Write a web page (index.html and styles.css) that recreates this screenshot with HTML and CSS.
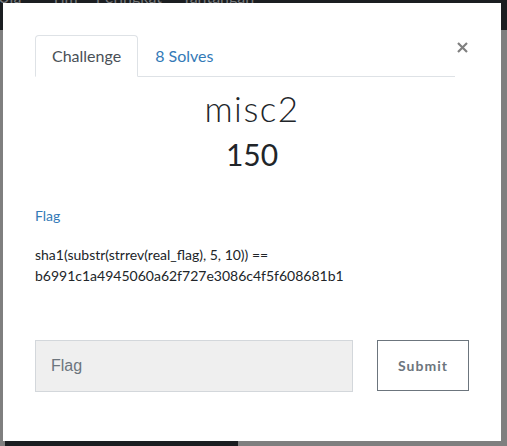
FILE: index.html
```html
<!DOCTYPE html>
<html lang="id">
<head>
<meta charset="utf-8">
<title>misc2</title>
<link rel="stylesheet" href="styles.css">
</head>
<body>
<header class="navbar">
  <span class="nav-brand">Ula</span>
  <span class="nav-item nav-tim">Tim</span>
  <span class="nav-item nav-rank">Peringkat</span>
  <span class="nav-item nav-chal">Tantangan</span>
</header>
<main class="page"></main>
<div class="page-foot"><div class="foot-dark"></div></div>

<div class="modal">
  <div class="modal-head">
    <nav class="tabs">
      <span class="tab tab-active">Challenge</span>
      <span class="tab tab-link">8 Solves</span>
    </nav>
    <span class="close" aria-label="Close">
      <svg width="11" height="11" viewBox="0 0 11 11"><path d="M1 1 L10 10 M10 1 L1 10" stroke="#808080" stroke-width="2.2" stroke-linecap="butt" fill="none"/></svg>
    </span>
  </div>
  <h2 class="chal-name">misc2</h2>
  <h3 class="chal-value">150</h3>
  <a class="chal-file">Flag</a>
  <p class="chal-desc">sha1(substr(strrev(real_flag), 5, 10)) ==<br>b6991c1a4945060a62f727e3086c4f5f608681b1</p>
  <form class="submit-row">
    <input class="flag-input" type="text" placeholder="Flag">
    <button class="submit-btn" type="button">Submit</button>
  </form>
</div>
</body>
</html>
```
FILE: styles.css
```css
html, body {
  margin: 0;
  padding: 0;
}
body {
  height: 446px;
  overflow: hidden;
  display: flex;
  flex-direction: column;
  background: #7f7f7f;
  font-family: Lato, "Liberation Sans", sans-serif;
}
.navbar {
  height: 30px;
  flex-shrink: 0;
  background: #1b1e21;
  display: flex;
  align-items: flex-start;
  font-size: 16px;
  line-height: 16px;
  color: #76797c;
}
.nav-brand, .nav-item {
  margin-top: -11px;
}
.nav-brand { margin-left: -2px; }
.nav-tim { margin-left: 30px; }
.nav-rank { margin-left: 18px; }
.nav-chal { margin-left: 20px; }
.page {
  flex: 1;
}
.page-foot {
  height: 5px;
  flex-shrink: 0;
}
.foot-dark {
  margin-left: 5px;
  width: 233px;
  height: 5px;
  background: #1b1e21;
}
.modal {
  position: absolute;
  top: 3px;
  left: 3px;
  width: 498px;
  height: 438px;
  box-sizing: border-box;
  background: #fff;
  padding: 32px 32px 0;
  display: flex;
  flex-direction: column;
  color: #212529;
}
.modal-head {
  display: flex;
  align-items: flex-start;
}
.tabs {
  width: 420px;
  display: flex;
  border-bottom: 1px solid #dee2e6;
}
.tab {
  display: block;
  padding: 8px 16px;
  font-size: 16px;
  line-height: 24px;
  border: 1px solid transparent;
  border-radius: 4px 4px 0 0;
  margin-bottom: -1px;
}
.tab-active {
  color: #495057;
  border-color: #dee2e6 #dee2e6 #fff;
  background: #fff;
}
.tab-link {
  color: #337ab7;
}
.close {
  margin-left: auto;
  margin-right: 1px;
  margin-top: 7px;
  display: block;
  width: 11px;
  height: 11px;
}
.close svg { display: block; }
.chal-name {
  margin: 10px 0 0;
  text-align: center;
  font-size: 35px;
  line-height: 1.2;
  font-weight: 300;
  letter-spacing: 1.5px;
  color: #212529;
}
.chal-value {
  margin: 7px 0 0;
  text-align: center;
  font-size: 30px;
  line-height: 1.2;
  font-weight: 400;
  color: #212529;
}
.chal-file {
  margin-top: 33px;
  align-self: flex-start;
  font-size: 14px;
  line-height: 21px;
  color: #337ab7;
}
.chal-desc {
  margin: 18px 0 0;
  font-size: 14px;
  line-height: 21px;
  color: #212529;
}
.submit-row {
  margin: 54px 0 0;
  display: flex;
  align-items: flex-start;
  gap: 24px;
}
.flag-input {
  width: 318px;
  height: 52px;
  box-sizing: border-box;
  margin: 0;
  padding: 0 15px;
  border: 1px solid #d3d7db;
  background: #efefef;
  font-family: "Liberation Sans", Arial, sans-serif;
  font-size: 16px;
  color: #495057;
  outline: none;
}
.flag-input::placeholder {
  color: #6c757d;
}
.submit-btn {
  width: 92px;
  height: 51px;
  box-sizing: border-box;
  margin: 0;
  border: 1px solid #6c757d;
  background: #fff;
  color: #6c757d;
  font-family: Lato, "Liberation Sans", sans-serif;
  font-weight: 700;
  font-size: 14px;
  letter-spacing: 1px;
  padding: 0;
}
```
